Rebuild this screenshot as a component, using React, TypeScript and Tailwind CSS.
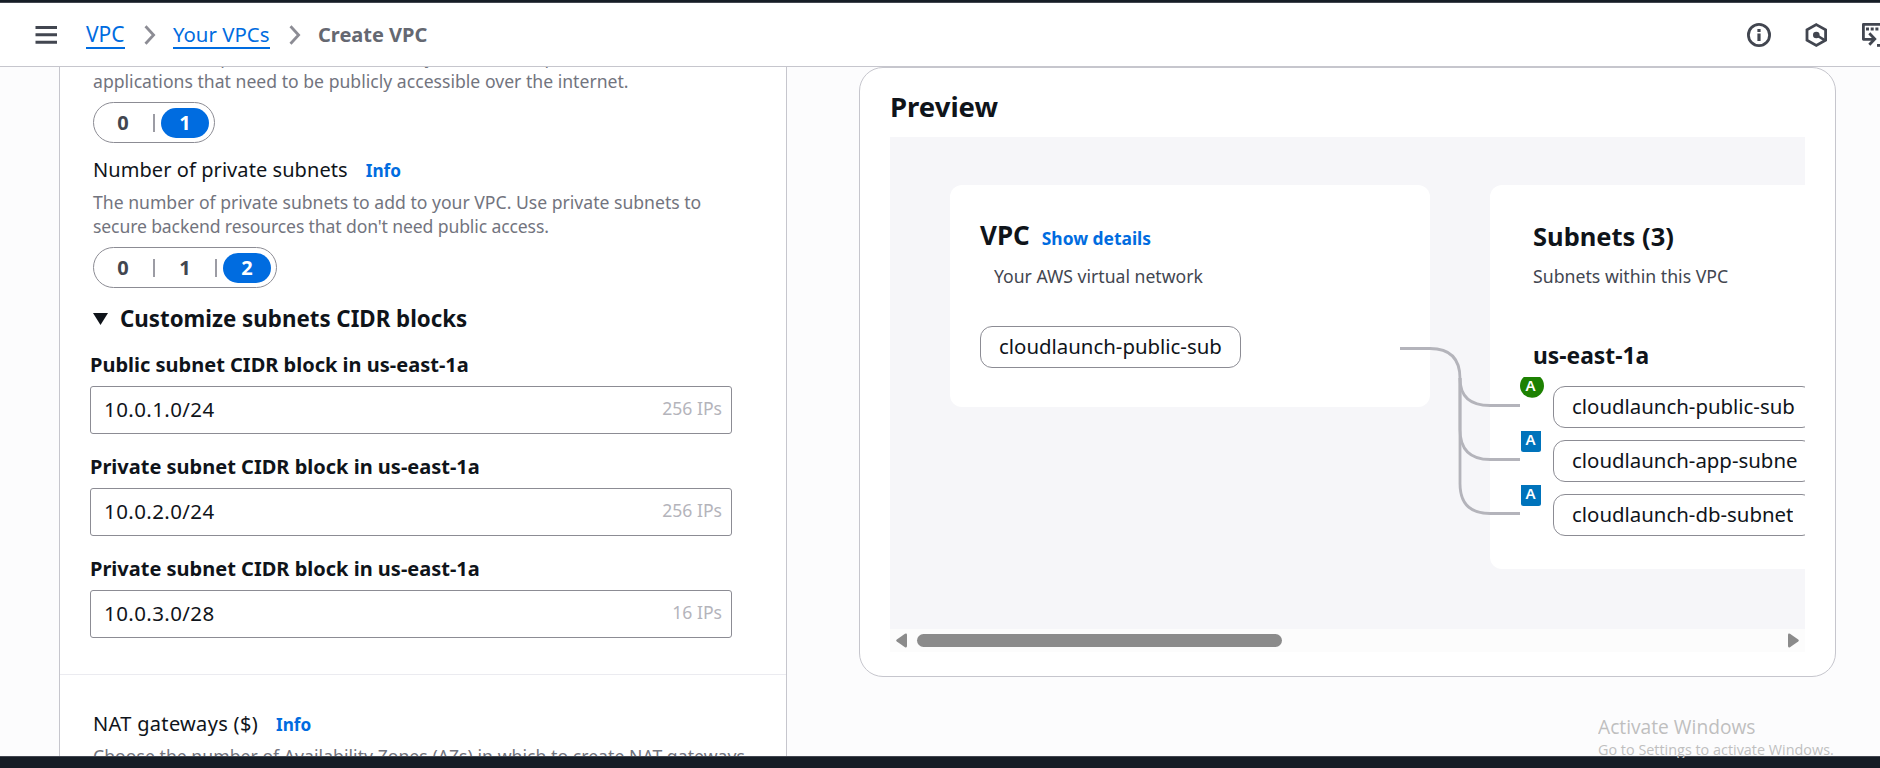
import { Fragment, type ReactNode } from "react";

function Segmented({ options, selected }: { options: string[]; selected: string }) {
  return (
    <div className="flex h-[41px] w-fit items-center rounded-full border border-[#8c8c94] px-[5px] text-[20px] font-bold text-[#424650]">
      {options.map((option, i) => (
        <Fragment key={option}>
          {i > 0 && <span className="mx-[6px] h-[18px] w-[2px] bg-[#9c9ca4]" />}
          <button
            className={
              option === selected
                ? "flex h-[30px] w-[48px] items-center justify-center rounded-full bg-[#006ce0] text-white"
                : "flex h-[30px] w-[48px] items-center justify-center rounded-full"
            }
          >
            {option}
          </button>
        </Fragment>
      ))}
    </div>
  );
}

function FieldTitle({ children }: { children: ReactNode }) {
  return (
    <div className="flex h-[28px] items-baseline gap-[18px] text-[20px] leading-[28px]">
      {children}
      <a className="text-[17.2px] font-bold text-[#006ce0]">Info</a>
    </div>
  );
}

function CidrField({ label, value, count }: { label: string; value: string; count: string }) {
  return (
    <div className="w-[642px]">
      <div className="text-[20px] leading-[28px] font-bold">{label}</div>
      <div className="mt-[7px] flex h-[48px] items-center justify-between rounded-[3px] border border-[#8c8c94] bg-white pr-[9px] pb-[2px] pl-[13px]">
        <span className="text-[20.5px] tracking-[0.4px]">{value}</span>
        <span className="pb-px text-[17.6px] text-[#b4b4bb]">{count}</span>
      </div>
    </div>
  );
}

function Chip({ children }: { children: ReactNode }) {
  return (
    <div className="flex h-[42px] w-[261px] shrink-0 items-center rounded-[12px] border border-[#8c8c94] bg-white pr-[16px] pb-[2px] pl-[18px]">
      <span className="overflow-hidden text-[20.4px] leading-[28px] whitespace-nowrap">{children}</span>
    </div>
  );
}

function Chevron() {
  return (
    <svg width="12" height="20" viewBox="0 0 12 20" fill="none" stroke="#8c8c94" strokeWidth="2.8">
      <path d="M1.5 1.2 9.6 10 1.5 18.8" />
    </svg>
  );
}

function Subnet({ name, open }: { name: string; open?: boolean }) {
  return (
    <div className="flex h-[54px]">
      <div className="w-[33px] shrink-0">
        {open ? (
          <svg width="24" height="21" viewBox="0 0 24 21">
            <circle cx="12" cy="8.8" r="12" fill="#1d8102" />
            <text x="10.5" y="13.7" textAnchor="middle" fontSize="15" fontWeight="600" fill="#fff">
              A
            </text>
          </svg>
        ) : (
          <svg width="24" height="21" viewBox="0 0 24 21">
            <rect x="1" y="-4" width="20" height="25" rx="2.5" fill="#0073bb" />
            <text x="10.5" y="13.7" textAnchor="middle" fontSize="15" fontWeight="600" fill="#fff">
              A
            </text>
          </svg>
        )}
      </div>
      <div className="mt-[9px]">
        <Chip>{name}</Chip>
      </div>
    </div>
  );
}

function Header() {
  return (
    <header className="flex h-[64px] shrink-0 items-center border-b border-[#c6c6cd] bg-white text-[20px]">
      <svg className="ml-[35px]" width="23" height="22" viewBox="0 0 23 22" stroke="#424650" strokeWidth="3">
        <path d="M.5 3.5H22M.5 10.8H22M.5 18.2H22" />
      </svg>
      <nav className="ml-[28px] flex items-center">
        <a className="h-[28px] w-[39px] border-b-2 border-[#006ce0] text-[21px] leading-[27px] text-[#006ce0]">VPC</a>
        <div className="ml-[19px] flex">
          <Chevron />
        </div>
        <a className="ml-[17px] h-[28px] w-[97px] border-b-2 border-[#006ce0] text-[20.4px] leading-[27px] whitespace-nowrap text-[#006ce0]">
          Your VPCs
        </a>
        <div className="ml-[19px] flex">
          <Chevron />
        </div>
        <span className="ml-[17px] h-[28px] text-[20px] leading-[27px] font-bold text-[#656871]">Create VPC</span>
      </nav>
      <div className="ml-auto flex w-[134px] shrink-0 items-center overflow-hidden">
        <svg className="ml-px shrink-0" width="24" height="24" viewBox="0 0 24 24" fill="none" stroke="#424650" strokeWidth="2.8">
          <circle cx="12" cy="12" r="10.6" />
          <path d="M12 6v3M12 10.5V18" strokeWidth="3.2" />
        </svg>
        <svg className="ml-[34px] shrink-0" width="23" height="24" viewBox="0 0 23 24" fill="none" stroke="#424650" strokeWidth="2.8">
          <path d="M11.3 1.6 20.6 6.8V17.2L11.3 22.4 2 17.2V6.8Z" />
          <path d="M11.3 12 20 17.3" strokeWidth="2.6" />
          <circle cx="11.3" cy="12" r="3.3" fill="#424650" stroke="none" />
        </svg>
        <svg className="ml-[32px] shrink-0" width="26" height="26" viewBox="0 0 26 26" fill="none" stroke="#424650" strokeWidth="2.8">
          <path d="M26 2.4H3.4V17.3H14" strokeLinejoin="round" />
          <path d="M9.3 11.2 14.8 17 9.3 22.8" />
          <path d="M6 7h3M10.7 7h3M15.4 7h3" />
          <path d="M17 23.4h9" />
        </svg>
      </div>
    </header>
  );
}

function SettingsPanel() {
  return (
    <section className="ml-[59px] h-[689px] w-[728px] shrink-0 overflow-hidden border-x-[1.5px] border-[#c6c6cd] bg-white">
      <div className="-mt-[22.5px] h-[630px] border-b border-[#ebebf0] pl-[33px]">
        <p className="w-[660px] text-[17.6px] leading-[24px] tracking-[0.01px] text-[#72747e]">
          The number of public subnets to add to your VPC. Use public subnets for web
          <br />
          applications that need to be publicly accessible over the internet.
        </p>
        <div className="mt-[9.5px]">
          <Segmented options={["0", "1"]} selected="1" />
        </div>
        <div className="mt-[13px]">
          <FieldTitle>
            <span className="tracking-[0.07px]">Number of private subnets</span>
          </FieldTitle>
        </div>
        <p className="mt-[5.5px] text-[17.6px] leading-[24px] text-[#72747e]">
          The number of private subnets to add to your VPC. Use private subnets to
          <br />
          <span className="tracking-[-0.13px]">secure backend resources that don't need public access.</span>
        </p>
        <div className="mt-[9.5px]">
          <Segmented options={["0", "1", "2"]} selected="2" />
        </div>
        <div className="mt-[16px] flex items-center">
          <svg className="mb-px" width="16" height="12" viewBox="0 0 16 12">
            <path d="M0 0H15L7.5 12Z" fill="#0f141a" />
          </svg>
          <h3 className="ml-[11px] text-[22.3px] leading-[30px] font-bold">Customize subnets CIDR blocks</h3>
        </div>
        <div className="mt-[17px] -ml-[3px] flex flex-col gap-[19px]">
          <CidrField label="Public subnet CIDR block in us-east-1a" value="10.0.1.0/24" count="256 IPs" />
          <CidrField label="Private subnet CIDR block in us-east-1a" value="10.0.2.0/24" count="256 IPs" />
          <CidrField label="Private subnet CIDR block in us-east-1a" value="10.0.3.0/28" count="16 IPs" />
        </div>
      </div>
      <div className="pt-[35px] pl-[33px]">
        <FieldTitle>
          <span className="tracking-[0.32px]">NAT gateways ($)</span>
        </FieldTitle>
        <p className="mt-[6.5px] text-[17.6px] leading-[24px] tracking-[0.04px] whitespace-nowrap text-[#72747e]">
          Choose the number of Availability Zones (AZs) in which to create NAT gateways
        </p>
      </div>
    </section>
  );
}

function Preview() {
  return (
    <section className="ml-[72px] h-[610px] w-[977px] shrink-0 rounded-[24px] border border-[#c6c6cd] bg-white px-[30px]">
      <h2 className="pt-[21px] text-[27.5px] leading-[36px] font-bold">Preview</h2>
      <div className="relative mt-[12px] flex h-[492px] w-[915px] items-start gap-[60px] overflow-hidden bg-[#f6f6f9] pt-[48px] pl-[60px]">
        <div className="h-[222px] w-[480px] shrink-0 rounded-[12px] bg-white pt-[32px] pl-[30px]">
          <div className="flex h-[36px] items-baseline gap-[12px] leading-[36px]">
            <h3 className="text-[26px] font-bold">VPC</h3>
            <a className="text-[17.4px] font-bold text-[#006ce0]">Show details</a>
          </div>
          <p className="mt-[11px] pl-[14px] text-[17.6px] leading-[24px] text-[#424650]">Your AWS virtual network</p>
          <div className="mt-[38px]">
            <Chip>cloudlaunch-public-sub</Chip>
          </div>
        </div>
        <div className="h-[384px] w-[480px] shrink-0 rounded-[12px] bg-white pt-[33px]">
          <h3 className="pl-[43px] text-[25.5px] leading-[36px] font-bold">Subnets (3)</h3>
          <p className="mt-[10px] pl-[43px] text-[17.7px] leading-[24px] text-[#424650]">Subnets within this VPC</p>
          <h4 className="mt-[53px] pl-[43px] text-[22.8px] leading-[30px] font-bold">us-east-1a</h4>
          <div className="mt-[6px] pl-[30px]">
            <Subnet name="cloudlaunch-public-sub" open />
            <Subnet name="cloudlaunch-app-subne" />
            <Subnet name="cloudlaunch-db-subnet" />
          </div>
        </div>
        <svg
          className="absolute top-[208px] left-[510px]"
          width="120"
          height="174"
          viewBox="0 0 120 174"
          fill="none"
          stroke="#b4b4bb"
          strokeWidth="2.8"
        >
          <path d="M0 3.5H30Q60 3.5 60 33.5Q60 60.5 90 60.5H120" />
          <path d="M60 33V84.5Q60 114.5 90 114.5H120" />
          <path d="M60 33V138.5Q60 168.5 90 168.5H120" />
        </svg>
      </div>
      <div className="flex h-[23px] w-[915px] items-center bg-[#fcfcfc]">
        <svg className="ml-[6px]" width="11" height="15" viewBox="0 0 11 15" fill="#8b8b8b">
          <path d="M11 2V13Q11 15 9 14.2L.8 8.6Q-.4 7.5.8 6.4L9 .8Q11 0 11 2Z" />
        </svg>
        <div className="ml-[10px] h-[13px] w-[365px] rounded-full bg-[#8b8b8b]" />
        <svg className="mr-[6px] ml-auto" width="11" height="15" viewBox="0 0 11 15" fill="#8b8b8b">
          <path d="M0 2V13Q0 15 2 14.2L10.2 8.6Q11.4 7.5 10.2 6.4L2 .8Q0 0 0 2Z" />
        </svg>
      </div>
    </section>
  );
}

export default function App() {
  return (
    <div className="relative flex h-[768px] w-[1880px] flex-col overflow-hidden bg-[#fcfcfd] font-['Noto_Sans',sans-serif] text-[#0f141a]">
      <div className="h-[3px] shrink-0 border-b border-[#424650] bg-[#161d26]" />
      <Header />
      <main className="flex h-[689px] shrink-0 items-start overflow-hidden">
        <SettingsPanel />
        <Preview />
      </main>
      <footer className="h-[12px] shrink-0 border-t border-[#424650] bg-[#161d26]" />
      <div className="absolute top-[715px] left-[1598px] h-[43px] overflow-hidden font-['Open_Sans',sans-serif] whitespace-nowrap text-[#bfbfbf]">
        <div className="text-[19.2px] leading-[24px]">Activate Windows</div>
        <div className="text-[14.4px] leading-[22px]">Go to Settings to activate Windows.</div>
      </div>
    </div>
  );
}
